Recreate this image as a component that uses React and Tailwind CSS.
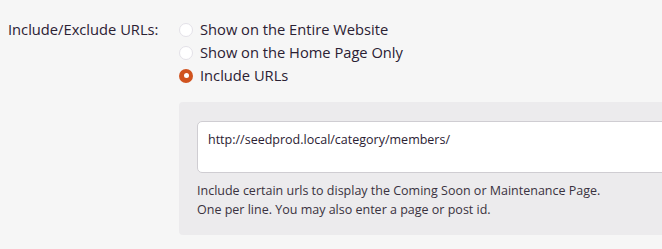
import React from "react";

const options = [
  { label: "Show on the Entire Website", checked: false },
  { label: "Show on the Home Page Only", checked: false },
  { label: "Include URLs", checked: true },
];

const Radio = ({ checked }) =>
  checked ? (
    <span className="w-[14px] h-[14px] rounded-full bg-[#d0531f] flex items-center justify-center shrink-0">
      <span className="w-[5px] h-[5px] rounded-full bg-white" />
    </span>
  ) : (
    <span className="w-[14px] h-[14px] rounded-full bg-white border border-[#e3e1e8] shrink-0" />
  );

const App = () => {
  return (
    <div
      className="w-[662px] h-[249px] bg-[#f6f6f6] overflow-hidden text-[#2b2133]"
      style={{ fontFamily: '"Open Sans", sans-serif' }}
    >
      <div className="flex pt-[18px]">
        <div className="w-[179px] shrink-0 pl-[8px] text-[14.7px] font-medium leading-[23px]">
          Include/Exclude URLs:
        </div>
        <div className="flex-1 min-w-0">
          <div className="flex flex-col">
            {options.map((o) => (
              <label key={o.label} className="flex items-center gap-[7px] h-[23px] text-[14.7px] font-medium whitespace-nowrap">
                <Radio checked={o.checked} />
                {o.label}
              </label>
            ))}
          </div>
          <div className="mt-[15px] w-[500px] bg-[#ecebed] rounded-[4px] pt-[19px] pb-[16px] pl-[18px]">
            <div className="h-[52px] bg-white border border-[#cfcdd2] rounded-[5px] px-[10px] pt-[8px] text-[12.5px] leading-[20px]">
              http://seedprod.local/category/members/
            </div>
            <p className="mt-[8px] text-[12.5px] leading-[19px] text-[#3a3240]">
              Include certain urls to display the Coming Soon or Maintenance Page.
              <br />
              One per line. You may also enter a page or post id.
            </p>
          </div>
        </div>
      </div>
    </div>
  );
};

export default App;
